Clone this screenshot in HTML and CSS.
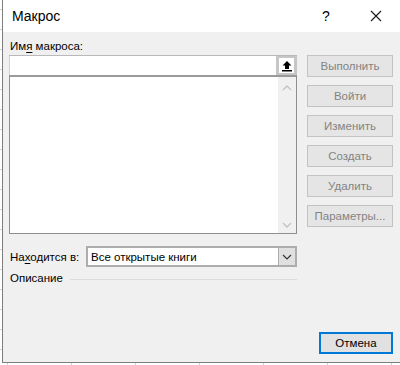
FILE: index.html
```html
<!DOCTYPE html>
<html lang="ru">
<head>
<meta charset="utf-8">
<link rel="stylesheet" href="styles.css">
</head>
<body>
<div class="dialog">
  <div class="titlebar">
    <span class="title">Макрос</span>
    <span class="help">?</span>
    <span class="close"><svg width="12" height="12" viewBox="0 0 12 12"><path d="M1 1L11 11M11 1L1 11" stroke="#1a1a1a" stroke-width="1.1" fill="none"/></svg></span>
  </div>
  <div class="content">
    <div class="main">
      <div class="left">
        <div class="lbl">Им<u>я</u> макроса:</div>
        <div class="namebox">
          <div class="field"></div>
          <div class="upbtn"><span class="upinner"><svg width="12" height="12" viewBox="0 0 12 12"><path d="M6 1L1.5 5.5H4V9H8V5.5H10.5Z" fill="#000"/><rect x="1" y="10" width="10" height="1.5" fill="#000"/></svg></span></div>
        </div>
        <div class="list">
          <div class="listarea"></div>
          <div class="scroll">
            <svg width="10" height="6" viewBox="0 0 10 6"><path d="M1 5L5 1L9 5" stroke="#c2c2c2" stroke-width="1.3" fill="none"/></svg>
            <svg width="10" height="6" viewBox="0 0 10 6"><path d="M1 1L5 5L9 1" stroke="#c2c2c2" stroke-width="1.3" fill="none"/></svg>
          </div>
        </div>
        <div class="where">
          <span class="wlbl">На<u>х</u>одится в:</span>
          <div class="select">
            <span class="sval">Все открытые книги</span>
            <span class="dd"><svg width="10" height="6" viewBox="0 0 10 6"><path d="M1 1L5 5L9 1" stroke="#333" stroke-width="1.2" fill="none"/></svg></span>
          </div>
        </div>
        <div class="desc"><span>Описание</span><div class="rule"></div></div>
      </div>
      <div class="buttons">
        <div class="btn">Выполнить</div>
        <div class="btn">Войти</div>
        <div class="btn">Изменить</div>
        <div class="btn">Создать</div>
        <div class="btn">Удалить</div>
        <div class="btn">Параметры...</div>
      </div>
    </div>
    <div class="footer"><div class="cancel">Отмена</div></div>
  </div>
</div>
</body>
</html>
```
FILE: styles.css
```css
html, body {
  margin: 0;
  padding: 0;
}
body {
  width: 400px;
  height: 365px;
  overflow: hidden;
  background-color: #ffffff;
  background-image:
    repeating-linear-gradient(to right, transparent 0, transparent 7px, #d4d4d4 7px, #d4d4d4 8px, transparent 8px, transparent 64px),
    repeating-linear-gradient(to bottom, transparent 0, transparent 9px, #d4d4d4 9px, #d4d4d4 10px, transparent 10px, transparent 20px);
  font-family: "Liberation Sans", Arial, sans-serif;
  font-size: 11.5px;
  color: #000;
}
.dialog {
  margin-left: 2px;
  width: 397px;
  height: 362px;
  border-left: 1px solid #7e7e7e;
  border-bottom: 1px solid #7e7e7e;
  display: flex;
  flex-direction: column;
  background: #f0f0f0;
}
.titlebar {
  height: 32px;
  background: #ffffff;
  display: flex;
  align-items: center;
  flex-shrink: 0;
}
.title {
  font-size: 14px;
  margin-left: 9px;
  flex: 1;
  padding-bottom: 1px;
}
.help {
  font-size: 14px;
  width: 14px;
  text-align: center;
  margin-right: 37px;
  padding-bottom: 1px;
}
.close {
  width: 12px;
  height: 12px;
  display: flex;
  margin-right: 18px;
}
.content {
  flex: 1;
  display: flex;
  flex-direction: column;
  padding: 7px 0 8px 6px;
}
.main {
  display: flex;
}
.left {
  width: 288px;
  display: flex;
  flex-direction: column;
}
.lbl {
  height: 16px;
  line-height: 15px;
  margin-left: 1px;
}
u {
  text-decoration-thickness: 1px;
  text-underline-offset: 2px;
}
.namebox {
  height: 20px;
  display: flex;
  background: #ffffff;
  border-top: 1px solid #b9b9b9;
  box-sizing: border-box;
}
.field {
  flex: 1;
  border-left: 1px solid #d0d0d0;
}
.upbtn {
  width: 21px;
  background: #c6c6c6;
  display: flex;
  align-items: center;
  justify-content: center;
}
.upinner {
  width: 15px;
  height: 15px;
  background: #ffffff;
  display: flex;
  align-items: center;
  justify-content: center;
}
.list {
  height: 159px;
  box-sizing: border-box;
  border: 1px solid #8f8f8f;
  border-top: 2px solid #9a9a9a;
  display: flex;
  background: #ffffff;
}
.listarea {
  flex: 1;
}
.scroll {
  width: 18px;
  background: #f0f0f0;
  display: flex;
  flex-direction: column;
  align-items: center;
  justify-content: space-between;
  padding: 8px 0 5px;
}
.where {
  margin-top: 12px;
  display: flex;
  align-items: center;
  height: 21px;
}
.wlbl {
  width: 76px;
  margin-left: 1px;
}
.select {
  flex: 1;
  height: 21px;
  box-sizing: border-box;
  border: 2px solid #adadad;
  background: #ffffff;
  display: flex;
  align-items: center;
}
.sval {
  flex: 1;
  padding-left: 3px;
}
.dd {
  width: 16px;
  height: 17px;
  background: #e0e0e0;
  border-left: 1px solid #adadad;
  display: flex;
  align-items: center;
  justify-content: center;
}
.desc {
  margin-top: 3px;
  height: 16px;
  display: flex;
  align-items: center;
  margin-left: 1px;
}
.rule {
  flex: 1;
  height: 1px;
  background: #dcdcdc;
  margin-left: 7px;
  margin-top: 2px;
}
.buttons {
  margin-left: 10px;
  padding-top: 16px;
  width: 86px;
  display: flex;
  flex-direction: column;
  gap: 8px;
}
.btn {
  height: 22px;
  box-sizing: border-box;
  border: 1px solid #c3c3c3;
  background: #e5e5e5;
  color: #838383;
  display: flex;
  align-items: center;
  justify-content: center;
}
.footer {
  margin-top: auto;
  display: flex;
  justify-content: flex-end;
}
.cancel {
  width: 74px;
  height: 22px;
  box-sizing: border-box;
  border: 2px solid #0078d7;
  background: #e1e1e1;
  display: flex;
  align-items: center;
  justify-content: center;
  margin-right: 7px;
}
```
